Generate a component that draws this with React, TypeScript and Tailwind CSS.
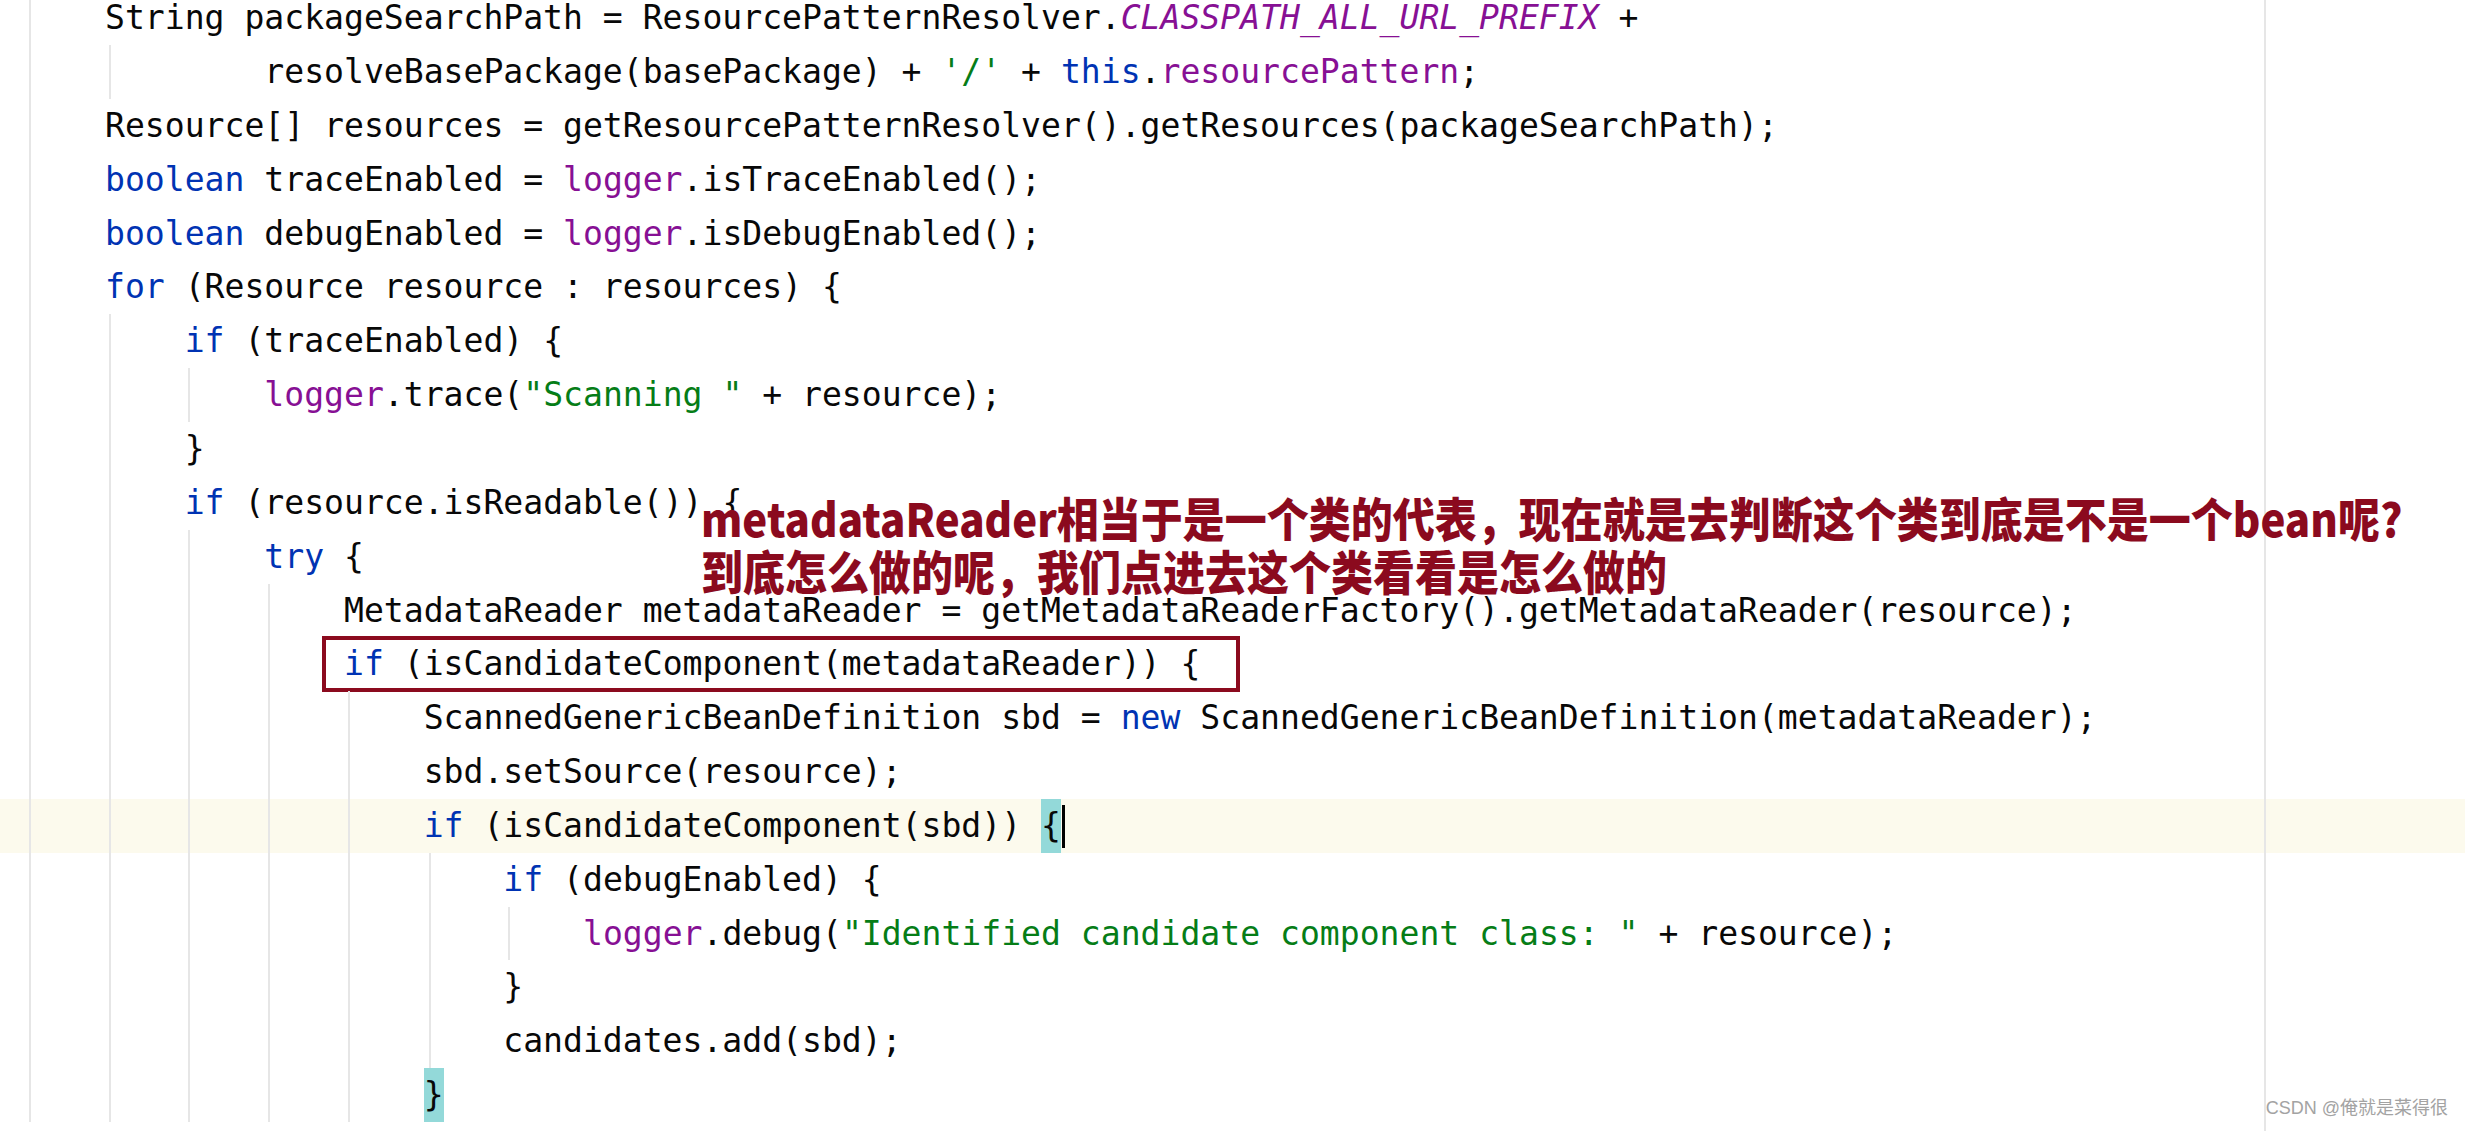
type Seg = [string, string?]

const K = "text-[#0033b3]"
const F = "text-[#871094]"
const FI = "text-[#871094] italic"
const S = "text-[#067d17]"

const lines: Seg[][] = [
  [["String packageSearchPath = ResourcePatternResolver."], ["CLASSPATH_ALL_URL_PREFIX", FI], [" +"]],
  [["        resolveBasePackage(basePackage) + "], ["'/'", S], [" + "], ["this", K], ["."], ["resourcePattern", F], [";"]],
  [["Resource[] resources = getResourcePatternResolver().getResources(packageSearchPath);"]],
  [["boolean", K], [" traceEnabled = "], ["logger", F], [".isTraceEnabled();"]],
  [["boolean", K], [" debugEnabled = "], ["logger", F], [".isDebugEnabled();"]],
  [["for", K], [" (Resource resource : resources) {"]],
  [["    "], ["if", K], [" (traceEnabled) {"]],
  [["        "], ["logger", F], [".trace("], ['"Scanning "', S], [" + resource);"]],
  [["    }"]],
  [["    "], ["if", K], [" (resource.isReadable()) {"]],
  [["        "], ["try", K], [" {"]],
  [["            MetadataReader metadataReader = getMetadataReaderFactory().getMetadataReader(resource);"]],
  [["            "], ["if", K], [" (isCandidateComponent(metadataReader)) {"]],
  [["                ScannedGenericBeanDefinition sbd = "], ["new", K], [" ScannedGenericBeanDefinition(metadataReader);"]],
  [["                sbd.setSource(resource);"]],
  [["                "], ["if", K], [" (isCandidateComponent(sbd)) "]],
  [["                    "], ["if", K], [" (debugEnabled) {"]],
  [["                        "], ["logger", F], [".debug("], ['"Identified candidate component class: "', S], [" + resource);"]],
  [["                    }"]],
  [["                    candidates.add(sbd);"]],
  [["                "]],
]

// indent guide x positions per line
const guidesFor = (i: number) => {
  const g = [29]
  if (i === 1 || i >= 6) g.push(109)
  if (i === 7 || i >= 10) g.push(188)
  if (i >= 11) g.push(268)
  if (i >= 13) g.push(348)
  if (i >= 16 && i <= 19) g.push(429)
  if (i === 17) g.push(508)
  return g
}

const Bracket = ({ ch, caret }: { ch: string; caret?: boolean }) => (
  <span className="relative inline-block bg-[#93d9d9]">
    {ch}
    {caret && <span className="absolute right-[-4px] top-[6px] h-[43px] w-[3px] bg-black" />}
  </span>
)

const CodeLine = ({ segs, i }: { segs: Seg[]; i: number }) => (
  <div
    className={
      "relative h-[53.85px] shrink-0 whitespace-pre pl-[105px] leading-[53.85px] " +
      (i === 15 ? "bg-[#fcfaed]" : "")
    }
  >
    {guidesFor(i).map((x) => (
      <span key={x} className="absolute top-0 h-full w-[2px] bg-[#e6e6e6]" style={{ left: x }} />
    ))}
    {i === 12 && (
      <span className="absolute left-[322px] top-[-1px] h-[56px] w-[918px] border-4 border-[#8b0a1e]" />
    )}
    <span className="relative">
      {segs.map(([t, c], j) => (
        <span key={j} className={c ?? ""}>
          {t}
        </span>
      ))}
      {i === 15 && <Bracket ch="{" caret />}
      {i === 20 && <Bracket ch="}" />}
    </span>
  </div>
)

export default function App() {
  return (
    <div className="relative h-[1131px] w-[2465px] overflow-hidden bg-white">
      <div className="-mt-[8.75px] flex flex-col font-['DejaVu_Sans_Mono',monospace] text-[33.1px] text-[#080808]">
        {lines.map((segs, i) => (
          <CodeLine key={i} segs={segs} i={i} />
        ))}
      </div>

      {/* right margin */}
      <div className="absolute left-[2264px] top-0 h-full w-[2px] bg-[#e6e6e6]" />

      {/* annotation */}
      <div className="absolute left-[701px] top-[491px] origin-top scale-y-110 whitespace-nowrap font-['Noto_Sans_CJK_SC',sans-serif] text-[42px] font-black leading-[48px] text-[#8b0a1e]">
        <p>metadataReader相当于是一个类的代表，现在就是去判断这个类到底是不是一个bean呢?</p>
        <p>到底怎么做的呢，我们点进去这个类看看是怎么做的</p>
      </div>

      <div className="absolute bottom-[9px] right-[17px] font-['Liberation_Sans','Noto_Sans_CJK_SC',sans-serif] text-[18px] text-[#a3a3a3]">
        CSDN @俺就是菜得很
      </div>
    </div>
  )
}
